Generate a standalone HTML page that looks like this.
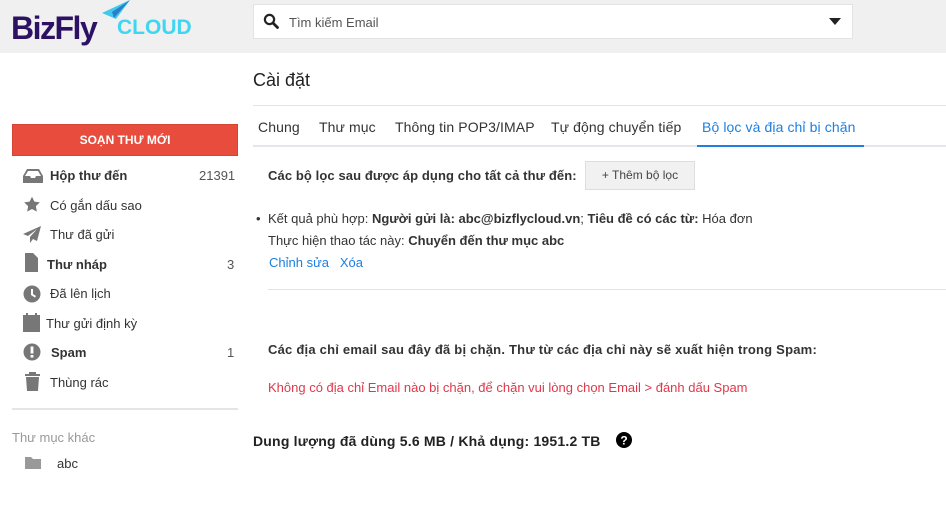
<!DOCTYPE html>
<html><head><meta charset="utf-8"><style>
*{margin:0;padding:0;box-sizing:border-box}
body{width:946px;height:531px;background:#fff;font-family:"Liberation Sans",Arial,sans-serif;font-size:13px;color:#333;position:relative;overflow:hidden}
.a{position:absolute;white-space:nowrap}
.hdr{position:absolute;left:0;top:0;width:946px;height:53px;background:#f0f0f0}
.nav .a{font-size:13px;color:#333}
b{font-weight:bold}
.ic{position:absolute;fill:#777}
.tab{font-size:14px;letter-spacing:0.1px}
</style></head><body>
<div class="hdr"></div>
<div class="a" style="left:11px;top:10px;font-size:32px;font-weight:bold;color:#2d1163;letter-spacing:-1.5px;line-height:36px">BizFly</div>
<div class="a" style="left:117px;top:16px;font-size:21px;font-weight:bold;color:#3fd6f2;line-height:24px">CLOUD</div>
<svg class="a" style="left:102px;top:0" width="30" height="22" viewBox="0 0 30 22"><polygon points="0,13 28,0 14,19" fill="#3fc9ee"/><polygon points="10,12 28,0 12,18" fill="#2a7fc6"/></svg>
<div class="a" style="left:253px;top:4px;width:600px;height:35px;background:#fff;border:1px solid #e3e3e3"></div>
<svg class="a" style="left:263px;top:13px" width="16" height="16" viewBox="0 0 16 16"><circle cx="6.5" cy="6.5" r="4.6" fill="none" stroke="#222" stroke-width="2.2"/><line x1="10" y1="10" x2="14.5" y2="14.5" stroke="#222" stroke-width="2.8" stroke-linecap="round"/></svg>
<div class="a" style="left:289px;top:15px;font-size:13px;color:#555">Tìm kiếm Email</div>
<svg class="a" style="left:829px;top:18px" width="12" height="8"><polygon points="0,0 12,0 6,7" fill="#222"/></svg>
<div class="a" style="left:253px;top:70px;font-size:18px;color:#222">Cài đặt</div>
<div class="a" style="left:12px;top:124px;width:226px;height:32px;background:#e84c3d;border:1px solid #d54334;color:#fff;font-size:12px;font-weight:bold;text-align:center;line-height:30px">SOẠN THƯ MỚI</div>
<div class="nav">
<svg class="ic" style="left:23px;top:169px" width="20" height="14" viewBox="0 0 20 14"><path d="M4 0h12l4 7v7H0V7zM2 7h5l1 2h4l1-2h5L15 2H5z"/></svg>
<div class="a" style="left:50px;top:168px"><b>Hộp thư đến</b></div><div class="a" style="left:199px;top:168px;color:#555">21391</div>
<svg class="ic" style="left:23px;top:196px" width="18" height="17" viewBox="0 0 24 24"><path d="M12 1l3.4 7 7.6 1-5.5 5.3 1.3 7.7L12 18.3 5.2 22l1.3-7.7L1 9l7.6-1z"/></svg>
<div class="a" style="left:50px;top:198px">Có gắn dấu sao</div>
<svg class="ic" style="left:23px;top:226px" width="18" height="17" viewBox="0 0 18 17"><path d="M18 0L0 8l5 2 9-7-7 8v6l3-4 4 2z"/></svg>
<div class="a" style="left:50px;top:227px">Thư đã gửi</div>
<svg class="ic" style="left:25px;top:253px" width="13" height="19" viewBox="0 0 13 19"><path d="M0 0h8l5 5v14H0z"/></svg>
<div class="a" style="left:47px;top:257px"><b>Thư nháp</b></div><div class="a" style="left:227px;top:257px;color:#555">3</div>
<svg class="ic" style="left:23px;top:285px" width="18" height="18" viewBox="0 0 18 18"><circle cx="9" cy="9" r="8.5"/><path d="M8 4h2v5l3 2-1 1.6L8 10z" fill="#fff"/></svg>
<div class="a" style="left:50px;top:286px">Đã lên lịch</div>
<svg class="ic" style="left:23px;top:313px" width="17" height="19" viewBox="0 0 17 19"><path d="M3 0h2v2h7V0h2v2h3v17H0V2h3z"/></svg>
<div class="a" style="left:46px;top:316px">Thư gửi định kỳ</div>
<svg class="ic" style="left:23px;top:343px" width="18" height="18" viewBox="0 0 18 18"><circle cx="9" cy="9" r="8.5"/><rect x="7.6" y="3.5" width="2.8" height="7" fill="#fff"/><rect x="7.6" y="12" width="2.8" height="2.6" fill="#fff"/></svg>
<div class="a" style="left:51px;top:345px"><b>Spam</b></div><div class="a" style="left:227px;top:345px;color:#555">1</div>
<svg class="ic" style="left:25px;top:372px" width="15" height="19" viewBox="0 0 15 19"><path d="M4 0h7v2h4v2H0V2h4zM1 5h13l-1 14H2z"/></svg>
<div class="a" style="left:50px;top:375px">Thùng rác</div>
</div>
<div class="a" style="left:12px;top:408px;width:226px;height:2px;background:#e5e5e5"></div>
<div class="a" style="left:12px;top:430px;font-size:13px;color:#999">Thư mục khác</div>
<svg class="ic" style="left:25px;top:457px;fill:#999" width="16" height="12" viewBox="0 0 16 12"><path d="M0 0h6l2 2h8v10H0z"/></svg>
<div class="a" style="left:57px;top:456px;font-size:13px;color:#333">abc</div>
<div class="a" style="left:253px;top:105px;width:693px;height:1px;background:#e3e3e3"></div>
<div class="a" style="left:253px;top:145px;width:693px;height:2px;background:#e3e6ea"></div>
<div class="a" style="left:697px;top:145px;width:167px;height:2px;background:#1e7fe0"></div>
<div class="a tab" style="left:258px;top:119px;color:#333">Chung</div>
<div class="a tab" style="left:319px;top:119px;color:#333">Thư mục</div>
<div class="a tab" style="left:395px;top:119px;color:#333">Thông tin POP3/IMAP</div>
<div class="a tab" style="left:551px;top:119px;color:#333">Tự động chuyển tiếp</div>
<div class="a tab" style="left:702px;top:119px;color:#1e7fe0">Bộ lọc và địa chỉ bị chặn</div>
<div class="a" style="left:268px;top:168px;letter-spacing:0.1px"><b>Các bộ lọc sau được áp dụng cho tất cả thư đến:</b></div>
<div class="a" style="left:585px;top:161px;width:110px;height:29px;background:#f1f1f1;border:1px solid #ddd;font-size:12px;color:#444;text-align:center;line-height:27px">+ Thêm bộ lọc</div>
<div class="a" style="left:256px;top:211px">•</div>
<div class="a" style="left:268px;top:211px">Kết quả phù hợp: <b>Người gửi là: abc@bizflycloud.vn</b>; <b>Tiêu đề có các từ:</b> Hóa đơn</div>
<div class="a" style="left:268px;top:233px">Thực hiện thao tác này: <b>Chuyển đến thư mục abc</b></div>
<div class="a" style="left:269px;top:255px;color:#1e7fe0">Chỉnh sửa&nbsp;&nbsp; Xóa</div>
<div class="a" style="left:268px;top:289px;width:678px;height:1px;background:#e3e3e3"></div>
<div class="a" style="left:268px;top:342px;letter-spacing:0.22px"><b>Các địa chỉ email sau đây đã bị chặn. Thư từ các địa chỉ này sẽ xuất hiện trong Spam:</b></div>
<div class="a" style="left:268px;top:380px;color:#e0384a">Không có địa chỉ Email nào bị chặn, để chặn vui lòng chọn Email &gt; đánh dấu Spam</div>
<div class="a" style="left:253px;top:433px;font-size:14px;color:#222;letter-spacing:0.2px"><b>Dung lượng đã dùng 5.6 MB / Khả dụng: 1951.2 TB</b></div>
<svg class="a" style="left:616px;top:432px" width="16" height="16" viewBox="0 0 16 16"><circle cx="8" cy="8" r="8" fill="#000"/><text x="8" y="12.5" font-family="Liberation Sans" font-weight="bold" font-size="12" fill="#fff" text-anchor="middle">?</text></svg>
</body></html>
